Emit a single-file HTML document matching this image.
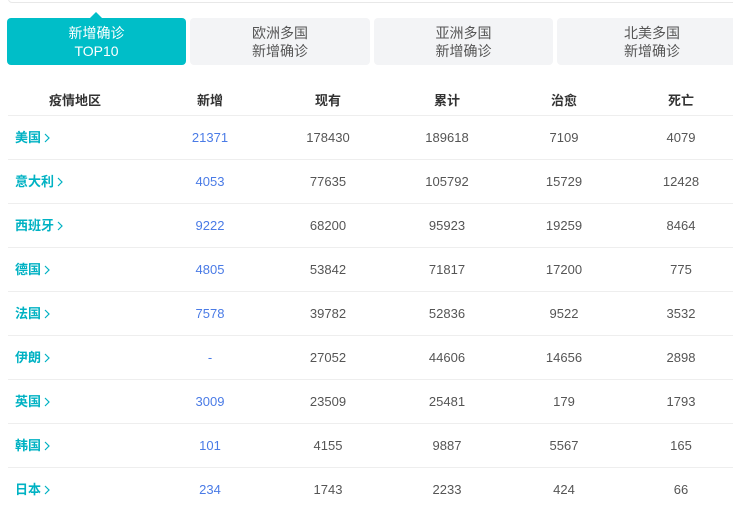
<!DOCTYPE html>
<html><head><meta charset="utf-8"><style>
*{margin:0;padding:0;box-sizing:border-box}
body{width:733px;height:512px;background:#fff;font-family:"Liberation Sans","Noto Sans CJK SC",sans-serif;position:relative;overflow:hidden;color:#555}
.top{position:absolute;left:8px;top:-10px;width:740px;height:13px;border:1px solid #e8e8e8;border-radius:4px}
.tab{position:absolute;top:18px;height:47px;border-radius:4px;background:#f3f4f6;color:#555;font-size:14px;line-height:18px;text-align:center;padding-top:6px}
.tab.on{background:#00bec8;color:#fff}
.tri{position:absolute;left:90px;top:12px;width:0;height:0;border-left:6px solid transparent;border-right:6px solid transparent;border-bottom:6px solid #00bec8}
.row{position:absolute;left:8px;width:730px;border-bottom:1px solid #eeeeee;height:44px}
.c{position:absolute;top:0;line-height:44px;font-size:13px;transform:translateX(-50%);white-space:nowrap}
.h .c{font-weight:bold;color:#333;line-height:30px}
.r{position:absolute;left:7px;line-height:44px;font-size:13px;color:#00b2c3;font-weight:bold}
.r svg{margin-left:3px;vertical-align:-1px}
.n{color:#4a7be6}
</style></head><body>
<svg width="0" height="0" style="position:absolute"><defs><symbol id="ch" viewBox="0 0 6 10"><path d="M1 1L5 5L1 9" fill="none" stroke="#00b2c3" stroke-width="1.2"/></symbol></defs></svg>
<div class="top"></div>
<div class="tri"></div>
<div class="tab on" style="left:7px;width:179px">新增确诊<br>TOP10</div>
<div class="tab" style="left:190px;width:180px">欧洲多国<br>新增确诊</div>
<div class="tab" style="left:374px;width:179px">亚洲多国<br>新增确诊</div>
<div class="tab" style="left:557px;width:190px">北美多国<br>新增确诊</div>

<div class="row h" style="top:86px;height:30px">
<div class="c" style="left:67px">疫情地区</div><div class="c" style="left:202px">新增</div><div class="c" style="left:320px">现有</div><div class="c" style="left:439px">累计</div><div class="c" style="left:556px">治愈</div><div class="c" style="left:673px">死亡</div>
</div>

<div class="row" style="top:116px"><div class="r">美国<svg width="6" height="10"><use href="#ch"/></svg></div><div class="c n" style="left:202px">21371</div><div class="c" style="left:320px">178430</div><div class="c" style="left:439px">189618</div><div class="c" style="left:556px">7109</div><div class="c" style="left:673px">4079</div></div>
<div class="row" style="top:160px"><div class="r">意大利<svg width="6" height="10"><use href="#ch"/></svg></div><div class="c n" style="left:202px">4053</div><div class="c" style="left:320px">77635</div><div class="c" style="left:439px">105792</div><div class="c" style="left:556px">15729</div><div class="c" style="left:673px">12428</div></div>
<div class="row" style="top:204px"><div class="r">西班牙<svg width="6" height="10"><use href="#ch"/></svg></div><div class="c n" style="left:202px">9222</div><div class="c" style="left:320px">68200</div><div class="c" style="left:439px">95923</div><div class="c" style="left:556px">19259</div><div class="c" style="left:673px">8464</div></div>
<div class="row" style="top:248px"><div class="r">德国<svg width="6" height="10"><use href="#ch"/></svg></div><div class="c n" style="left:202px">4805</div><div class="c" style="left:320px">53842</div><div class="c" style="left:439px">71817</div><div class="c" style="left:556px">17200</div><div class="c" style="left:673px">775</div></div>
<div class="row" style="top:292px"><div class="r">法国<svg width="6" height="10"><use href="#ch"/></svg></div><div class="c n" style="left:202px">7578</div><div class="c" style="left:320px">39782</div><div class="c" style="left:439px">52836</div><div class="c" style="left:556px">9522</div><div class="c" style="left:673px">3532</div></div>
<div class="row" style="top:336px"><div class="r">伊朗<svg width="6" height="10"><use href="#ch"/></svg></div><div class="c n" style="left:202px">-</div><div class="c" style="left:320px">27052</div><div class="c" style="left:439px">44606</div><div class="c" style="left:556px">14656</div><div class="c" style="left:673px">2898</div></div>
<div class="row" style="top:380px"><div class="r">英国<svg width="6" height="10"><use href="#ch"/></svg></div><div class="c n" style="left:202px">3009</div><div class="c" style="left:320px">23509</div><div class="c" style="left:439px">25481</div><div class="c" style="left:556px">179</div><div class="c" style="left:673px">1793</div></div>
<div class="row" style="top:424px"><div class="r">韩国<svg width="6" height="10"><use href="#ch"/></svg></div><div class="c n" style="left:202px">101</div><div class="c" style="left:320px">4155</div><div class="c" style="left:439px">9887</div><div class="c" style="left:556px">5567</div><div class="c" style="left:673px">165</div></div>
<div class="row" style="top:468px;border:none"><div class="r">日本<svg width="6" height="10"><use href="#ch"/></svg></div><div class="c n" style="left:202px">234</div><div class="c" style="left:320px">1743</div><div class="c" style="left:439px">2233</div><div class="c" style="left:556px">424</div><div class="c" style="left:673px">66</div></div>
</body></html>
